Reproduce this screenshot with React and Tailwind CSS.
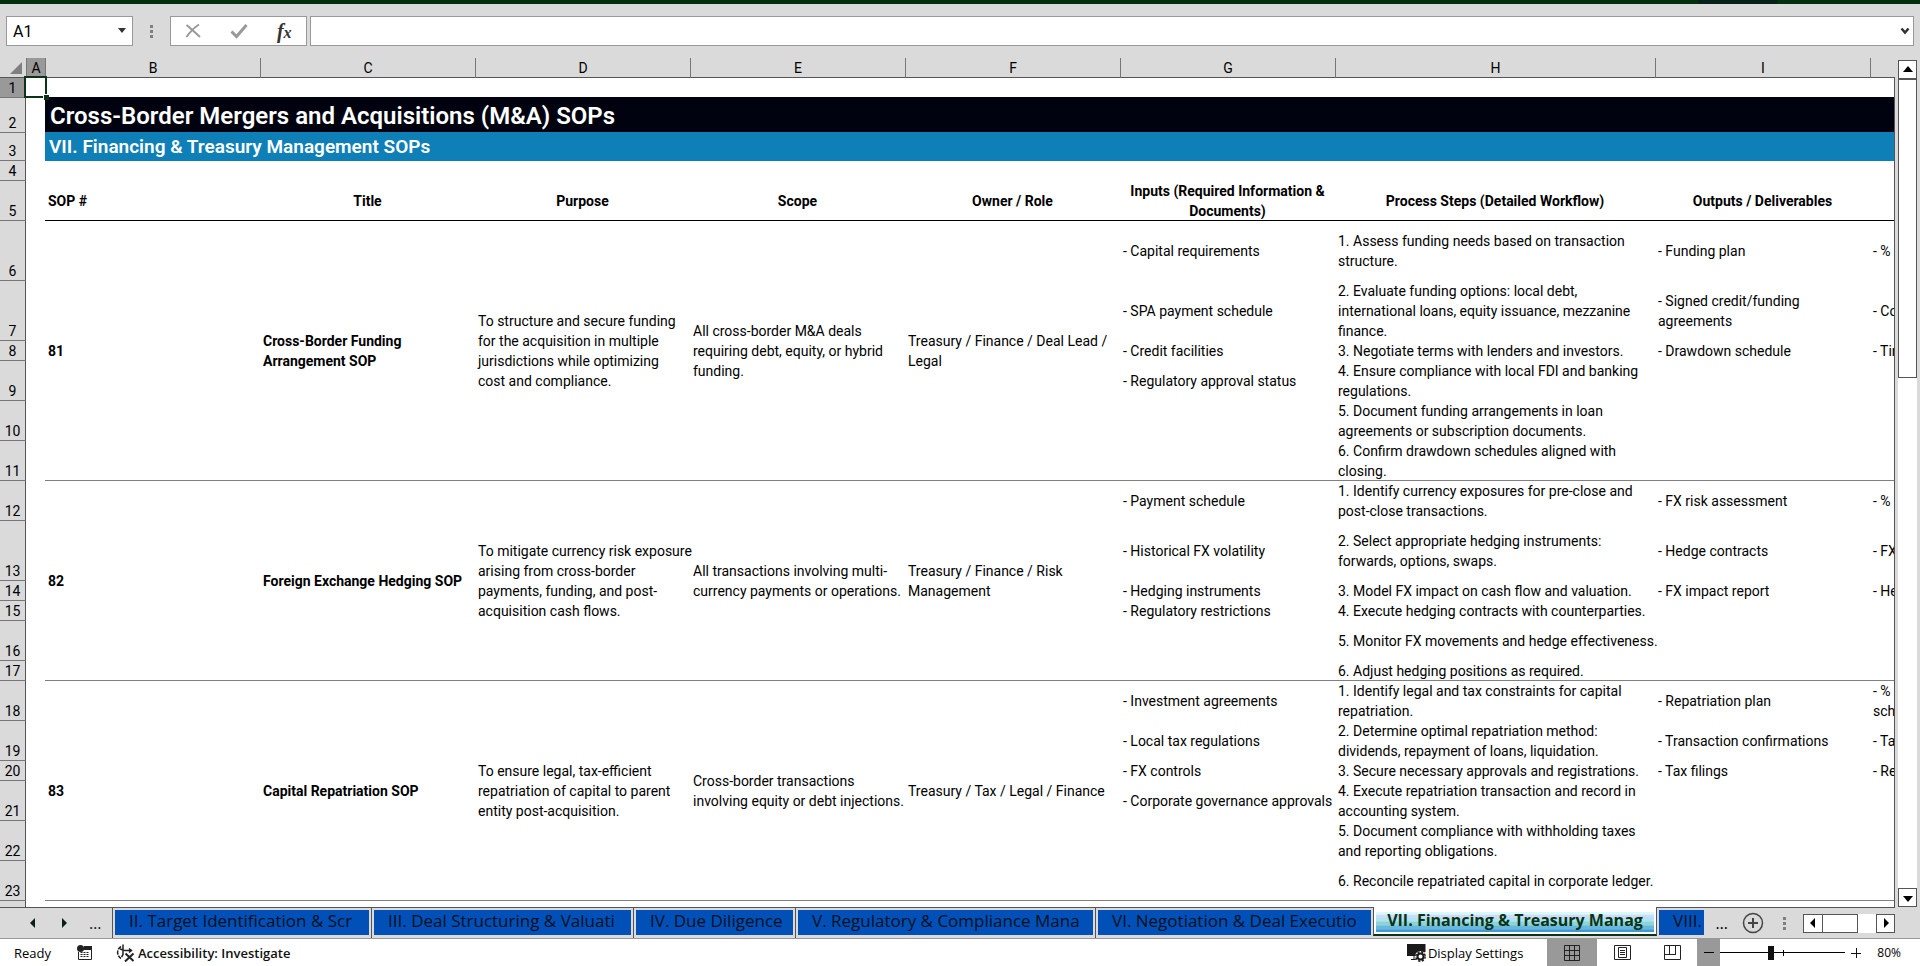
import { useState } from "react";

const columns = [
    { id: "A", width: "w-[19px]", active: true },
    { id: "B", width: "w-[215px]" },
    { id: "C", width: "w-[215px]" },
    { id: "D", width: "w-[215px]" },
    { id: "E", width: "w-[215px]" },
    { id: "F", width: "w-[215px]" },
    { id: "G", width: "w-[215px]" },
    { id: "H", width: "w-[320px]" },
    { id: "I", width: "w-[215px]" },
    { id: "", width: "w-auto" },
];

const headings = [
    "Title",
    "Purpose",
    "Scope",
    "Owner / Role",
    "Inputs (Required Information &\nDocuments)",
    "Process Steps (Detailed Workflow)",
    "Outputs / Deliverables",
];

// each line holds the row height, then columns G to J
const sops = [
    {
        number: 81,
        firstRow: 6,
        title: "Cross-Border Funding\nArrangement SOP",
        purpose: "To structure and secure funding\nfor the acquisition in multiple\njurisdictions while optimizing\ncost and compliance.",
        scope: "All cross-border M&A deals\nrequiring debt, equity, or hybrid\nfunding.",
        owner: "Treasury / Finance / Deal Lead /\nLegal",
        lines: [
            ["h-[60px]", "- Capital requirements", "1. Assess funding needs based on transaction\nstructure.", "- Funding plan", "- %"],
            ["h-[60px]", "- SPA payment schedule", "2. Evaluate funding options: local debt,\ninternational loans, equity issuance, mezzanine\nfinance.", "- Signed credit/funding\nagreements", "- Co"],
            ["h-[20px]", "- Credit facilities", "3. Negotiate terms with lenders and investors.", "- Drawdown schedule", "- Tir"],
            ["h-[40px]", "- Regulatory approval status", "4. Ensure compliance with local FDI and banking\nregulations.", "", ""],
            ["h-[40px]", "", "5. Document funding arrangements in loan\nagreements or subscription documents.", "", ""],
            ["h-[40px]", "", "6. Confirm drawdown schedules aligned with\nclosing.", "", ""],
        ],
    },
    {
        number: 82,
        firstRow: 12,
        title: "Foreign Exchange Hedging SOP",
        purpose: "To mitigate currency risk exposure\narising from cross-border\npayments, funding, and post-\nacquisition cash flows.",
        scope: "All transactions involving multi-\ncurrency payments or operations.",
        owner: "Treasury / Finance / Risk\nManagement",
        lines: [
            ["h-[40px]", "- Payment schedule", "1. Identify currency exposures for pre-close and\npost-close transactions.", "- FX risk assessment", "- %"],
            ["h-[60px]", "- Historical FX volatility", "2. Select appropriate hedging instruments:\nforwards, options, swaps.", "- Hedge contracts", "- FX"],
            ["h-[20px]", "- Hedging instruments", "3. Model FX impact on cash flow and valuation.", "- FX impact report", "- He"],
            ["h-[20px]", "- Regulatory restrictions", "4. Execute hedging contracts with counterparties.", "", ""],
            ["h-[40px]", "", "5. Monitor FX movements and hedge effectiveness.", "", ""],
            ["h-[20px]", "", "6. Adjust hedging positions as required.", "", ""],
        ],
    },
    {
        number: 83,
        firstRow: 18,
        title: "Capital Repatriation SOP",
        purpose: "To ensure legal, tax-efficient\nrepatriation of capital to parent\nentity post-acquisition.",
        scope: "Cross-border transactions\ninvolving equity or debt injections.",
        owner: "Treasury / Tax / Legal / Finance",
        lines: [
            ["h-[40px]", "- Investment agreements", "1. Identify legal and tax constraints for capital\nrepatriation.", "- Repatriation plan", "- %\nsch"],
            ["h-[40px]", "- Local tax regulations", "2. Determine optimal repatriation method:\ndividends, repayment of loans, liquidation.", "- Transaction confirmations", "- Ta"],
            ["h-[20px]", "- FX controls", "3. Secure necessary approvals and registrations.", "- Tax filings", "- Re"],
            ["h-[40px]", "- Corporate governance approvals", "4. Execute repatriation transaction and record in\naccounting system.", "", ""],
            ["h-[40px]", "", "5. Document compliance with withholding taxes\nand reporting obligations.", "", ""],
            ["h-[40px]", "", "6. Reconcile repatriated capital in corporate ledger.", "", ""],
        ],
    },
];

const tabs = [
    { name: "II. Target Identification & Scr", width: "w-[259px]" },
    { name: "III. Deal Structuring & Valuati", width: "w-[262px]" },
    { name: "IV. Due Diligence", width: "w-[162px]" },
    { name: "V. Regulatory & Compliance Mana", width: "w-[300px]" },
    { name: "VI. Negotiation & Deal Executio", width: "w-[278px]" },
    { name: "VII. Financing & Treasury Manag", width: "w-[284px]" },
    { name: "VIII.", width: "w-[49px]" },
];

const Triangle = ({ points, className }) => (
    <svg viewBox="0 0 10 10" className={className} fill="currentColor" aria-hidden="true">
        <polygon points={points} />
    </svg>
);

const GripDots = () => (
    <div className="flex flex-col gap-0.5">
        <span className="size-[3px] bg-[#7f7f7f]" />
        <span className="size-[3px] bg-[#7f7f7f]" />
        <span className="size-[3px] bg-[#7f7f7f]" />
    </div>
);

const FormulaBar = () => (
    <div className="flex h-[54px] shrink-0 items-center pl-1.5 pr-1.5">
        <div className="relative h-[30px] w-[127px]">
            <input
                aria-label="Name box"
                defaultValue="A1"
                className="h-full w-full border border-[#999] bg-white pl-1.5 text-base text-black outline-none"
            />
            <button aria-label="Open name list" className="absolute right-1.5 top-2.5">
                <Triangle points="1,2 9,2 5,7" className="size-2.5 text-[#333]" />
            </button>
        </div>
        <div className="flex w-[37px] justify-center">
            <GripDots />
        </div>
        <div className="mr-[3px] flex h-[30px] w-[137px] items-center justify-around border border-[#999] bg-white">
            <button aria-label="Cancel">
                <svg viewBox="0 0 16 16" className="size-4" fill="none" stroke="#999" strokeWidth="2">
                    <path d="M1.5 2c4 3 9 8 13.500 12M14 1.500C10 4 5 9 1.500 14" />
                </svg>
            </button>
            <button aria-label="Enter">
                <svg viewBox="0 0 18 16" className="h-4 w-[18px]" fill="none" stroke="#999" strokeWidth="3">
                    <path d="M1.500 8.500l5 5L16.500 2" />
                </svg>
            </button>
            <button
                aria-label="Insert function"
                className="flex items-baseline font-['Liberation_Serif',serif] font-bold italic leading-5 text-[#333]"
            >
                <span className="text-xl">f</span>
                <span className="text-base">x</span>
            </button>
        </div>
        <div className="relative h-[30px] flex-1">
            <input
                aria-label="Formula bar"
                className="h-full w-full border border-[#999] bg-white px-2 text-base outline-none"
            />
            <button aria-label="Expand formula bar" className="absolute right-1 top-2.5">
                <svg viewBox="0 0 10 10" className="size-2.5" fill="none" stroke="#333" strokeWidth="2.500">
                    <path d="M1.500 2.500L5 6.500l3.500-4" />
                </svg>
            </button>
        </div>
    </div>
);

const RowNumber = ({ height, active, children }) => (
    <th
        scope="row"
        className={`${height} border-b border-r border-b-[#777] border-r-[#555] p-0 text-center align-bottom font-normal leading-[18px] ${
            active ? "bg-[#999]" : "bg-[#dadada]"
        }`}
    >
        {children}
    </th>
);

const Cell = ({ last, bold, rowSpan, children }) => (
    <td
        rowSpan={rowSpan}
        className={`whitespace-pre py-0 pl-[3px] pr-0 align-middle ${bold ? "font-bold" : ""} ${
            last ? "shadow-[inset_0_-1px_0_#808080]" : ""
        }`}
    >
        {children}
    </td>
);

const SopRows = ({ sop }) =>
    sop.lines.map(([height, ...cells], i) => (
        <tr key={i}>
            <RowNumber height={height}>{sop.firstRow + i}</RowNumber>
            <td className="p-0" />
            {i === 0 && (
                <>
                    <Cell rowSpan={6} bold last>{sop.number}</Cell>
                    <Cell rowSpan={6} bold last>{sop.title}</Cell>
                    <Cell rowSpan={6} last>{sop.purpose}</Cell>
                    <Cell rowSpan={6} last>{sop.scope}</Cell>
                    <Cell rowSpan={6} last>{sop.owner}</Cell>
                </>
            )}
            {cells.map((text, j) => (
                <Cell key={j} last={i === 5}>{text}</Cell>
            ))}
        </tr>
    ));

const Sheet = () => (
    <div className="relative min-w-0 flex-1 overflow-hidden">
        <table className="w-full table-fixed border-separate border-spacing-0 bg-white text-sm leading-5">
            <colgroup>
                <col className="w-[26px]" />
                {columns.map((col, i) => (
                    <col key={i} className={col.width} />
                ))}
            </colgroup>
            <thead>
                <tr>
                    <th className="h-5 border-b border-[#555] bg-[#dadada] p-0">
                        <Triangle points="10,0 10,10 0,10" className="ml-2.5 size-3 text-[#7f7f7f]" />
                    </th>
                    {columns.map((col, i) => (
                        <th
                            key={i}
                            scope="col"
                            className={`h-5 border-b border-l border-b-[#555] border-l-[#777] p-0 pt-0.5 font-normal leading-[17px] ${
                                col.active ? "bg-[#999]" : "bg-[#dadada]"
                            }`}
                        >
                            {col.id}
                        </th>
                    ))}
                </tr>
            </thead>
            <tbody>
                <tr>
                    <RowNumber height="h-[20px]" active>1</RowNumber>
                    <td className="relative p-0">
                        <div className="absolute -inset-x-0.5 -top-0.5 bottom-0 z-10 border-2 border-[#0a3318]" />
                        <div className="absolute -bottom-0.5 -right-1 z-10 size-[6px] border-l border-t border-white bg-[#0a3318]" />
                    </td>
                    <td colSpan={9} />
                </tr>
                <tr>
                    <RowNumber height="h-[35px]">2</RowNumber>
                    <td className="p-0" />
                    <td
                        colSpan={9}
                        className="bg-[#00030f] py-0 pl-[5px] text-2xl font-semibold text-white shadow-[0_-1px_0_#00030f]"
                    >
                        Cross-Border Mergers and Acquisitions (M&amp;A) SOPs
                    </td>
                </tr>
                <tr>
                    <RowNumber height="h-[28px]">3</RowNumber>
                    <td className="p-0" />
                    <td
                        colSpan={9}
                        className="bg-[#0f7fb8] py-0 pl-1 text-[19px] leading-6 font-semibold text-white shadow-[0_-1px_0_#0f7fb8]"
                    >
                        VII. Financing &amp; Treasury Management SOPs
                    </td>
                </tr>
                <tr>
                    <RowNumber height="h-[20px]">4</RowNumber>
                    <td colSpan={10} className="p-0" />
                </tr>
                <tr>
                    <RowNumber height="h-[40px]">5</RowNumber>
                    <td className="p-0" />
                    <th scope="col" className="py-0 pl-[3px] text-left font-bold shadow-[inset_0_-1px_0_#000]">
                        SOP #
                    </th>
                    {headings.map((heading) => (
                        <th
                            key={heading}
                            scope="col"
                            className="whitespace-pre p-0 text-center font-bold shadow-[inset_0_-1px_0_#000]"
                        >
                            {heading}
                        </th>
                    ))}
                    <td className="shadow-[inset_0_-1px_0_#000]" />
                </tr>
                {sops.map((sop) => (
                    <SopRows key={sop.number} sop={sop} />
                ))}
                <tr>
                    <RowNumber height="h-[20px]" />
                    <td colSpan={10} className="p-0" />
                </tr>
            </tbody>
        </table>
        {/* right edge of the grid */}
        <div className="absolute bottom-0 right-0 top-[19px] w-px bg-[#555]" />
    </div>
);

const VerticalScroll = () => (
    <div className="mx-[3px] mt-0.5 flex w-[19px] shrink-0 flex-col bg-white">
        <button aria-label="Scroll up" className="flex h-[19px] items-center justify-center border border-[#555]">
            <Triangle points="0,7 10,7 5,1" className="size-2.5 text-black" />
        </button>
        <div className="min-h-0 flex-1">
            <div className="h-[37%] border border-[#555] bg-white" />
        </div>
        <button aria-label="Scroll down" className="flex h-[19px] items-center justify-center border border-[#555]">
            <Triangle points="0,3 10,3 5,9" className="size-2.5 text-black" />
        </button>
    </div>
);

const SheetTabs = () => {
    const [active, setActive] = useState(5);

    return (
        <div className="h-8 shrink-0 border-b border-[#999] pr-[25px]">
            <div className="flex h-full border-t border-[#555] font-['Open_Sans',sans-serif]">
                <div className="flex w-28 shrink-0 items-center text-[#0a2010]">
                    <button aria-label="Previous sheet" className="ml-7">
                        <Triangle points="7,0 7,10 2,5" className="size-2.5" />
                    </button>
                    <button aria-label="Next sheet" className="ml-[21px]">
                        <Triangle points="3,0 3,10 8,5" className="size-2.5" />
                    </button>
                    <button aria-label="More sheets before" className="ml-5 text-base leading-5">…</button>
                </div>
                <div role="tablist" className="flex min-w-0 overflow-visible">
                    {tabs.map((tab, i) =>
                        i === active ? (
                            <button
                                key={tab.name}
                                role="tab"
                                aria-selected="true"
                                className={`${tab.width} -mt-px mb-[2px] shrink-0 border-b-2 border-l border-r border-b-[#0a3318] border-l-[#555] border-r-[#555] bg-white px-0.5 pb-0.5 pt-[5px]`}
                            >
                                <span className="flex h-full items-center justify-center whitespace-nowrap bg-[linear-gradient(#d3fcff_0_12%,#d9d6f6_14%_26%,#a9e6f2_30%_46%,#8fd3d6_50%_66%,#68b7dc_70%_86%,#4398d6_90%)] pb-1 text-base leading-4 font-bold text-[#0a3318]">
                                    {tab.name}
                                </span>
                            </button>
                        ) : (
                            <button
                                key={tab.name}
                                role="tab"
                                aria-selected="false"
                                onClick={() => setActive(i)}
                                className={`${tab.width} ${
                                    i === active + 1 ? "" : "border-l border-[#555]"
                                } shrink-0 px-0.5 pb-[3px] pt-0.5`}
                            >
                                <span className="flex h-full items-center whitespace-nowrap bg-[#0050b8] pb-1 pl-3.5 text-[17px] leading-[22px] text-[#00101c]">
                                    {tab.name}
                                </span>
                            </button>
                        )
                    )}
                </div>
                <div className="ml-auto flex items-center">
                    <button aria-label="More sheets after" className="mr-3.5 text-base leading-5">…</button>
                    <button aria-label="New sheet">
                        <svg viewBox="0 0 22 22" className="size-[22px]" fill="none" stroke="#444" strokeWidth="1.500">
                            <circle cx="11" cy="11" r="9.500" />
                            <path d="M11 6v10M6 11h10" strokeWidth="2" />
                        </svg>
                    </button>
                    <div className="ml-[19px] mr-[17px]">
                        <GripDots />
                    </div>
                    <div className="flex h-[19px] w-[92px] bg-white">
                        <button aria-label="Scroll left" className="flex w-5 items-center justify-center border border-[#555]">
                            <Triangle points="7,0 7,10 2,5" className="size-2.5 text-black" />
                        </button>
                        <div className="-ml-px w-9 border border-[#555]" />
                        <button aria-label="Scroll right" className="ml-auto flex w-[19px] items-center justify-center border border-[#555]">
                            <Triangle points="3,0 3,10 8,5" className="size-2.5 text-black" />
                        </button>
                    </div>
                </div>
            </div>
        </div>
    );
};

const StatusBar = () => (
    <div className="flex h-[27px] shrink-0 items-center bg-white pl-3.5 pr-[19px] font-['Open_Sans',sans-serif] text-[13px] leading-5 text-black">
        <span className="w-[63px]">Ready</span>
        <button aria-label="Record macro" className="mr-6">
            <svg viewBox="0 0 15 15" className="size-[15px]">
                <path d="M7 1h8v4H6z" fill="#222" />
                <circle cx="3.500" cy="3.500" r="3.500" fill="#222" />
                <path d="M1.500 7v7.500h13V4" fill="none" stroke="#222" />
                <path d="M3.500 7.500h9M3.500 9.500h9M3.500 11.500h9" fill="none" stroke="#222" strokeDasharray="2 1" />
            </svg>
        </button>
        <button className="flex items-center gap-[3px] font-semibold text-[#111]">
            <svg viewBox="0 0 19 18" className="h-[18px] w-[19px]" fill="none" stroke="#222" strokeWidth="1.500">
                <path d="M5 2.500A7 7 0 0 0 5 14.500" strokeDasharray="4 1.200" />
                <path d="M4 5l5 1.500h6M7 .500v6M13 4.500l2.500 2-2.500 2M7 6.500v4L5.500 13" />
                <path d="M9.500 9.500l8 7.500M17.500 9.500L9 17.500" strokeWidth="2" />
            </svg>
            <span>Accessibility: Investigate</span>
        </button>

        <button className="ml-auto mr-6 flex items-center gap-0.5">
            <svg viewBox="0 0 19 18" className="h-[18px] w-[19px]">
                <path d="M0 0h18.500v8L9 12H0z" fill="#1a1a1a" />
                <path d="M4 15.500h5M7 12v3" stroke="#1a1a1a" fill="none" />
                <circle cx="13.500" cy="12.500" r="5.500" fill="#fff" />
                <circle cx="13.500" cy="12.500" r="3" fill="none" stroke="#1a1a1a" strokeWidth="2" />
                <circle cx="13.500" cy="12.500" r="4.700" fill="none" stroke="#1a1a1a" strokeWidth="1.500" strokeDasharray="2.200 1.500" />
            </svg>
            <span>Display Settings</span>
        </button>
        <button aria-label="Normal view" className="flex h-full w-[50px] items-center justify-center bg-[#999]">
            <svg viewBox="0 0 16 16" className="size-4" fill="none" stroke="#222">
                <path d="M.500.500h15v15H.500zM5.500.500v15M10.500.500v15M.500 5.500h15M.500 10.500h15" />
            </svg>
        </button>
        <button aria-label="Page layout view" className="flex h-full w-[50px] items-center justify-center">
            <svg viewBox="0 0 17 15" className="h-[15px] w-[17px]" fill="none" stroke="#222">
                <path d="M.500.500h16v14H.500zM4.500 2.500h8v10h-8zM6 5.500h5M6 7.500h5M6 9.500h5" />
            </svg>
        </button>
        <button aria-label="Page break preview" className="flex h-full w-[50px] items-center justify-center">
            <svg viewBox="0 0 17 15" className="h-[15px] w-[17px]" fill="none" stroke="#222">
                <path d="M.500.500h16v14H.500zM5.500.500v9M11.500.500v9M1 9.500h11" />
            </svg>
        </button>
        <button aria-label="Zoom out" className="flex h-full w-[23px] items-center justify-center bg-[#999]">
            <span className="h-px w-2.5 bg-black" />
        </button>
        <div className="relative flex w-[125px] items-center">
            <input
                type="range"
                aria-label="Zoom"
                min="0"
                max="100"
                defaultValue="40"
                className="h-3.5 w-full appearance-none bg-[linear-gradient(#000,#000)] bg-size-[100%_1px] bg-center bg-no-repeat [&::-webkit-slider-thumb]:h-3.5 [&::-webkit-slider-thumb]:w-[6px] [&::-webkit-slider-thumb]:appearance-none [&::-webkit-slider-thumb]:bg-[#111]"
            />
            <span className="pointer-events-none absolute left-1/2 top-1 h-1.5 w-px bg-black" />
        </div>
        <button aria-label="Zoom in" className="ml-1.5">
            <svg viewBox="0 0 10 10" className="size-2.5" fill="none" stroke="#111">
                <path d="M5.500 0v10M0 5.500h10" />
            </svg>
        </button>
        <button className="ml-4 text-xs leading-5">80%</button>
    </div>
);

const App = () => {
    return (
        <div className="flex h-screen flex-col overflow-hidden bg-[#dadada] font-[Roboto,sans-serif] text-black">
            <div className="flex h-1 shrink-0 justify-end bg-[#03300f] pr-[142px]">
                <div className="h-full w-20 rounded-b-full bg-[#06201a]" />
            </div>
            <FormulaBar />
            <div className="flex min-h-0 flex-1">
                <Sheet />
                <VerticalScroll />
            </div>
            <SheetTabs />
            <StatusBar />
        </div>
    );
};

export default App;
